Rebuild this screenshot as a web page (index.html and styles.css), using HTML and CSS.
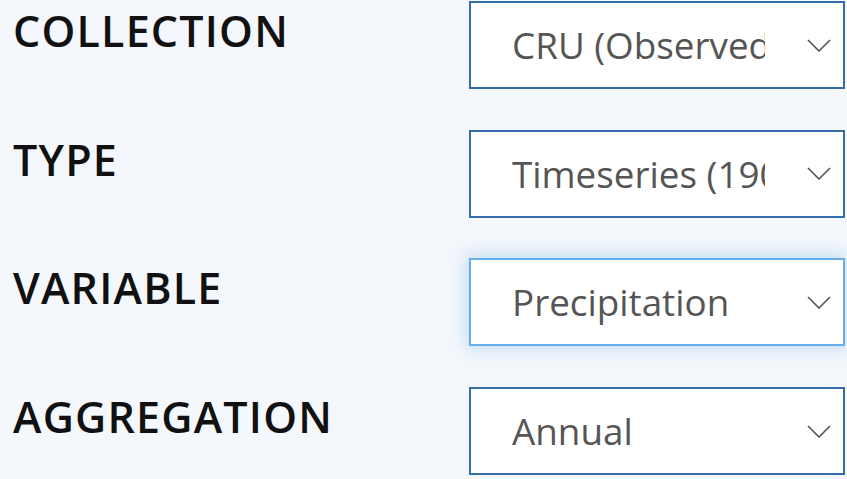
FILE: index.html
```html
<!DOCTYPE html>
<html lang="en">
<head>
<meta charset="utf-8">
<title>Filters</title>
<link rel="stylesheet" href="styles.css">
</head>
<body>
<form class="filters">
  <div class="row">
    <label class="label">COLLECTION</label>
    <div class="select">
      <span class="value">CRU (Observed)</span>
      <svg class="chev" width="24" height="13" viewBox="0 0 24 13"><polyline points="1,1 12,12 23,1" fill="none" stroke="#555" stroke-width="1.6"/></svg>
    </div>
  </div>
  <div class="row">
    <label class="label">TYPE</label>
    <div class="select">
      <span class="value">Timeseries (1901-2022)</span>
      <svg class="chev" width="24" height="13" viewBox="0 0 24 13"><polyline points="1,1 12,12 23,1" fill="none" stroke="#555" stroke-width="1.6"/></svg>
    </div>
  </div>
  <div class="row">
    <label class="label">VARIABLE</label>
    <div class="select focused">
      <span class="value">Precipitation</span>
      <svg class="chev" width="24" height="13" viewBox="0 0 24 13"><polyline points="1,1 12,12 23,1" fill="none" stroke="#555" stroke-width="1.6"/></svg>
    </div>
  </div>
  <div class="row">
    <label class="label">AGGREGATION</label>
    <div class="select">
      <span class="value">Annual</span>
      <svg class="chev" width="24" height="13" viewBox="0 0 24 13"><polyline points="1,1 12,12 23,1" fill="none" stroke="#555" stroke-width="1.6"/></svg>
    </div>
  </div>
</form>
</body>
</html>
```

FILE: styles.css
```css
html, body {
  margin: 0;
  padding: 0;
  background: #f4f7fb;
}
body {
  font-family: "Open Sans", "Noto Sans", sans-serif;
  width: 847px;
  height: 479px;
  overflow: hidden;
}
.filters {
  display: flex;
  flex-direction: column;
  gap: 40.7px;
  padding: 1px 0 0 13px;
}
.row {
  display: flex;
  align-items: flex-start;
  height: 88px;
}
.label {
  width: 456px;
  flex: none;
  font-size: 43px;
  font-weight: 600;
  letter-spacing: 1.2px;
  color: #111;
  line-height: normal;
}
.select {
  box-sizing: border-box;
  width: 376px;
  height: 88px;
  flex: none;
  background: #fff;
  border: 2px solid #336ea8;
  display: flex;
  align-items: center;
  padding: 0 12px 0 41px;
}
.select.focused {
  border-color: #66aee9;
  box-shadow: 0 0 16px 3px rgba(102, 174, 233, 0.35);
}
.value {
  width: 253px;
  flex: none;
  overflow: hidden;
  white-space: nowrap;
  font-size: 36.8px;
  color: #555;
  line-height: normal;
}
.chev {
  margin-left: auto;
  display: block;
}
```
